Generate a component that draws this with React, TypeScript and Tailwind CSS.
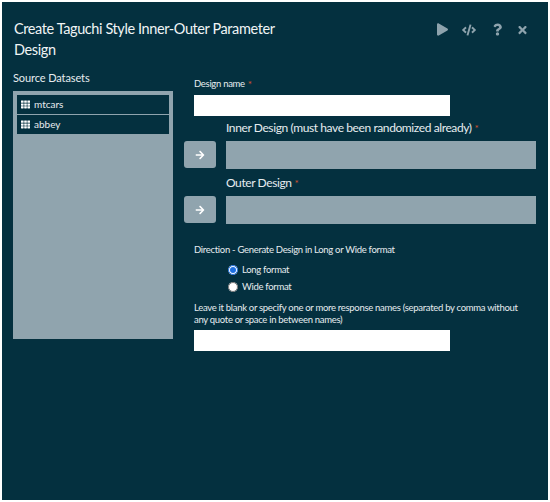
import { FaPlay, FaCode, FaQuestion, FaTimes, FaArrowRight, FaTh } from 'react-icons/fa';

const font = "font-['Lato','Open_Sans',sans-serif]";
const small = 'text-[9.5px] tracking-[-0.3px]';

function Req() {
  return <span className="text-[#d9502e] ml-[3px] text-[10px] align-top">*</span>;
}

function ArrowSlot({ label }: { label: string }) {
  return (
    <div className="flex flex-col">
      <div className="ml-[42px] text-[12px] tracking-[-0.4px] leading-[18px] text-[#e6ecef]">
        {label}
        <Req />
      </div>
      <div className="flex mt-[4px] items-start">
        <button className="w-[32px] h-[27px] rounded-[3px] bg-[#90a4ae] flex items-center justify-center text-white">
          <FaArrowRight className="w-[10px] h-[10px]" />
        </button>
        <div className="ml-[10px] w-[310px] h-[28px] bg-[#90a4ae]" />
      </div>
    </div>
  );
}

export default function App() {
  return (
    <div className={`w-[550px] h-[502px] bg-white pt-[2px] pl-[2px] ${font}`}>
      <div className="w-[546px] h-[498px] bg-[#04303f] text-[#e6ecef] flex flex-col">
        {/* header */}
        <div className="flex justify-between items-start pl-[12px] pt-[16px] pr-[21px] h-[69px]">
          <h1 className="w-[285px] text-[14.5px] tracking-[-0.4px] leading-[21px] text-[#f0f4f5]">
            Create Taguchi Style Inner-Outer Parameter Design
          </h1>
          <div className="flex items-center mt-[5px] text-[#8ea3ad]">
            <FaPlay className="w-[11px] h-[13px]" />
            <FaCode className="w-[14px] h-[12px] ml-[14px]" />
            <FaQuestion className="w-[9px] h-[13px] ml-[17px]" />
            <FaTimes className="w-[9px] h-[12px] ml-[16px]" />
          </div>
        </div>

        <div className="flex items-start">
          {/* source list */}
          <div className="ml-[11px] w-[160px]">
            <div className="text-[11px] tracking-[-0.1px] leading-[14px] text-[#e6ecef]">Source Datasets</div>
            <div className="mt-[6px] h-[248px] bg-[#90a4ae] p-[4px] flex flex-col gap-px">
              {['mtcars', 'abbey'].map((name) => (
                <div key={name} className="h-[19px] bg-[#04303f] flex items-center pl-[4px] text-[10px] text-[#e6ecef]">
                  <FaTh className="w-[9px] h-[9px] mr-[4px] text-white" />
                  {name}
                </div>
              ))}
            </div>
          </div>

          {/* form */}
          <div className="ml-[11px] flex flex-col">
            <div className={`ml-[10px] mt-[7px] ${small} leading-[12px] text-[#e6ecef]`}>
              Design name
              <Req />
            </div>
            <div className="ml-[10px] mt-[5px] w-[256px] h-[21px] bg-white" />
            <div className="mt-[3px] flex flex-col gap-[5px]">
              <ArrowSlot label="Inner Design (must have been randomized already)" />
              <ArrowSlot label="Outer Design" />
            </div>
            <div className={`ml-[10px] mt-[20px] ${small} leading-[12px]`}>
              Direction - Generate Design in Long or Wide format
            </div>
            <label className={`ml-[44px] mt-[7px] flex items-center h-[14px] ${small}`}>
              <input type="radio" name="fmt" defaultChecked className="w-[10px] h-[10px] accent-[#1d6fe0] mr-[4px]" />
              Long format
            </label>
            <label className={`ml-[44px] mt-[3px] flex items-center h-[14px] ${small}`}>
              <input type="radio" name="fmt" className="w-[10px] h-[10px] mr-[4px]" />
              Wide format
            </label>
            <div className={`ml-[10px] mt-[8px] w-[332px] ${small} leading-[12px]`}>
              Leave it blank or specify one or more response names (separated by comma without any quote or space in between names)
            </div>
            <div className="ml-[10px] mt-[4px] w-[256px] h-[21px] bg-white" />
          </div>
        </div>
      </div>
    </div>
  );
}
